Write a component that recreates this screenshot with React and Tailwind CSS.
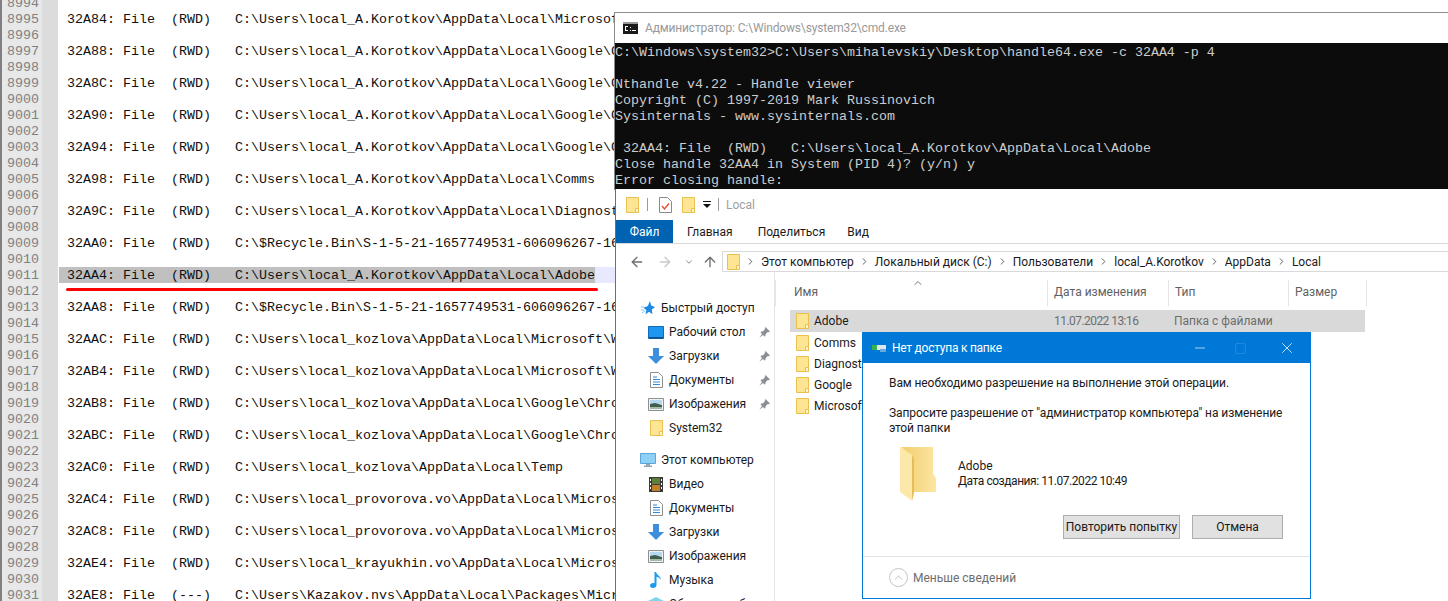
import React from 'react';
import { ArrowLeft, ArrowRight, ArrowUp, ChevronDown, ChevronRight, ChevronUp, Minus, Square, X } from 'lucide-react';

const logRows = {
  8995: '32A84: File  (RWD)   C:\\Users\\local_A.Korotkov\\AppData\\Local\\Microsoft\\Windows',
  8997: '32A88: File  (RWD)   C:\\Users\\local_A.Korotkov\\AppData\\Local\\Google\\Chrome',
  8999: '32A8C: File  (RWD)   C:\\Users\\local_A.Korotkov\\AppData\\Local\\Google\\Chrome',
  9001: '32A90: File  (RWD)   C:\\Users\\local_A.Korotkov\\AppData\\Local\\Google\\Chrome',
  9003: '32A94: File  (RWD)   C:\\Users\\local_A.Korotkov\\AppData\\Local\\Google\\Chrome',
  9005: '32A98: File  (RWD)   C:\\Users\\local_A.Korotkov\\AppData\\Local\\Comms',
  9007: '32A9C: File  (RWD)   C:\\Users\\local_A.Korotkov\\AppData\\Local\\Diagnostics',
  9009: '32AA0: File  (RWD)   C:\\$Recycle.Bin\\S-1-5-21-1657749531-606096267-1644491937',
  9011: '32AA4: File  (RWD)   C:\\Users\\local_A.Korotkov\\AppData\\Local\\Adobe',
  9013: '32AA8: File  (RWD)   C:\\$Recycle.Bin\\S-1-5-21-1657749531-606096267-1644491937',
  9015: '32AAC: File  (RWD)   C:\\Users\\local_kozlova\\AppData\\Local\\Microsoft\\Windows',
  9017: '32AB4: File  (RWD)   C:\\Users\\local_kozlova\\AppData\\Local\\Microsoft\\Windows',
  9019: '32AB8: File  (RWD)   C:\\Users\\local_kozlova\\AppData\\Local\\Google\\Chrome\\User',
  9021: '32ABC: File  (RWD)   C:\\Users\\local_kozlova\\AppData\\Local\\Google\\Chrome\\User',
  9023: '32AC0: File  (RWD)   C:\\Users\\local_kozlova\\AppData\\Local\\Temp',
  9025: '32AC4: File  (RWD)   C:\\Users\\local_provorova.vo\\AppData\\Local\\Microsoft\\Windows',
  9027: '32AC8: File  (RWD)   C:\\Users\\local_provorova.vo\\AppData\\Local\\Microsoft\\Windows',
  9029: '32AE4: File  (RWD)   C:\\Users\\local_krayukhin.vo\\AppData\\Local\\Microsoft\\Windows',
  9031: '32AE8: File  (---)   C:\\Users\\Kazakov.nvs\\AppData\\Local\\Packages\\Microsoft.Windows',
};

const lineNumbers = Array.from({ length: 38 }, (_, i) => 8994 + i);

const terminalLines = [
  'C:\\Windows\\system32>C:\\Users\\mihalevskiy\\Desktop\\handle64.exe -c 32AA4 -p 4',
  '',
  'Nthandle v4.22 - Handle viewer',
  'Copyright (C) 1997-2019 Mark Russinovich',
  'Sysinternals - www.sysinternals.com',
  '',
  ' 32AA4: File  (RWD)   C:\\Users\\local_A.Korotkov\\AppData\\Local\\Adobe',
  'Close handle 32AA4 in System (PID 4)? (y/n) y',
  'Error closing handle:',
];

const crumbs = ['Этот компьютер', 'Локальный диск (C:)', 'Пользователи', 'local_A.Korotkov', 'AppData', 'Local'];

const FolderIcon = ({ className = '' }) => (
  <svg width="13" height="16" viewBox="0 0 13 16" className={`shrink-0 ${className}`}>
    <path d="M.5.5h12v15H.5z" fill="#fde593" stroke="#eac14f" />
    <path d="M9.500 11.500h3v4h-3z" fill="#fff6cf" stroke="#eac14f" />
  </svg>
);

const CheckDocIcon = () => (
  <svg width="13" height="16" viewBox="0 0 13 16" className="shrink-0">
    <path d="M.5.5h8l4 4v11H.5z" fill="#fff" stroke="#8a8a8a" />
    <path d="M3 9l2.500 3L10 6.500" fill="none" stroke="#e0502a" strokeWidth="1.4" />
  </svg>
);

const StarIcon = () => (
  <svg width="14" height="14" viewBox="0 0 14 14" className="shrink-0">
    <path d="M9 0l1.200 4.400L14 6l-3.200 2.600.6 4.600L8 10.800 4.400 13.600l1-4.400L2.600 6.800 6.800 5z" fill="#1e88e5" />
    <path d="M0 6h3M0 9h3M1 12l3-2" stroke="#8cc4f0" strokeWidth="1" />
  </svg>
);

const DesktopIcon = () => (
  <svg width="16" height="13" viewBox="0 0 16 13" className="shrink-0">
    <path d="M.5.5h15v12H.5z" fill="#1e96f0" stroke="#0f6cbd" />
    <path d="M1 11h14v1.500H1z" fill="#0a4e8c" />
  </svg>
);

const DownloadIcon = () => (
  <svg width="16" height="16" viewBox="0 0 16 16" className="shrink-0">
    <path d="M5 0h6v8h5l-8 8-8-8h5z" fill="#3d8fde" />
  </svg>
);

const DocsIcon = () => (
  <svg width="13" height="16" viewBox="0 0 13 16" className="shrink-0 ml-[2px]">
    <path d="M.5.5h8l4 4v11H.5z" fill="#fff" stroke="#8f8f8f" />
    <path d="M3 5h4M3 7.500h7M3 10h7M3 12.500h7" stroke="#2f8ae0" />
  </svg>
);

const PictureIcon = () => (
  <svg width="16" height="13" viewBox="0 0 16 13" className="shrink-0">
    <path d="M.5.5h15v12H.5z" fill="#eef4f8" stroke="#8f8f8f" />
    <path d="M2 2h12v4H2z" fill="#b6d8ee" />
    <path d="M2 6l5-1 7 2v4H2z" fill="#3f5f4f" />
    <path d="M2 9h12v2H2z" fill="#a7b8a6" />
  </svg>
);

const FilmIcon = () => (
  <svg width="14" height="15" viewBox="0 0 14 15" className="shrink-0 ml-[1px]">
    <path d="M0 0h14v15H0z" fill="#3a3a3a" />
    <path d="M3 1h8v6H3z" fill="#5d7f3a" />
    <path d="M3 8h8v6H3z" fill="#c47f2a" />
    <path d="M1 2h1v2H1zM1 6h1v2H1zM1 10h1v2H1zM12 2h1v2h-1zM12 6h1v2h-1zM12 10h1v2h-1z" fill="#fff" />
  </svg>
);

const MusicIcon = () => (
  <svg width="12" height="16" viewBox="0 0 12 16" className="shrink-0 ml-[2px]">
    <path d="M4.500 0h1.500c.4 3 5 4 5 8-1-2-3-3-4.500-3.200V13c0 1.800-1.600 3-3.500 3S0 15 0 13.500 1.600 11 3 11c.6 0 1.100.1 1.500.3z" fill="#1a9af0" />
  </svg>
);

const MonitorIcon = () => (
  <svg width="16" height="14" viewBox="0 0 16 14" className="shrink-0">
    <path d="M.5.5h15v10H.5z" fill="#8fd0f5" stroke="#5aa6d8" />
    <path d="M6 11h4v1.500H6zM4 12.500h8V14H4z" fill="#9aa5ad" />
  </svg>
);

const CubeIcon = () => (
  <svg width="16" height="14" viewBox="0 0 16 14" className="shrink-0">
    <path d="M8 0l8 4-8 4-8-4z" fill="#7fd6e8" />
    <path d="M0 4l8 4v6l-8-4z" fill="#3fb4d0" />
    <path d="M16 4l-8 4v6l8-4z" fill="#58c4dc" />
  </svg>
);

const PinIcon = () => (
  <svg width="11" height="11" viewBox="0 0 11 11" className="shrink-0">
    <path d="M6.500 0L11 4.500 9.800 5.200 8.800 5 6.500 7.300 6.400 9 5.500 9.500 1.600 5.500 2 4.600 3.700 4.500 6 2.200 5.800 1.200zM3 7L.3 10.700 4 8z" fill="#8b8f94" />
  </svg>
);

const BigFolderIcon = () => (
  <svg width="37" height="54" viewBox="0 0 37 54" className="shrink-0">
    <defs>
      <linearGradient id="folderBack" x1="0" y1="0" x2="1" y2="0">
        <stop offset="0" stopColor="#f3cd6d" />
        <stop offset="1" stopColor="#fbe6a2" />
      </linearGradient>
    </defs>
    <path d="M1 0h32v27l3 4v14H12V10z" fill="url(#folderBack)" />
    <path d="M0 0l12 8v46L0 45z" fill="#fce9a9" />
    <path d="M12 8v46l2-8V12z" fill="#e5bd5d" />
  </svg>
);

const DialogIcon = () => (
  <svg width="15" height="10" viewBox="0 0 15 10" className="shrink-0">
    <path d="M0 2h5v5H0z" fill="#35b34a" />
    <path d="M5 2h9v5H5z" fill="#dfe7ee" />
    <path d="M8 6h6v3H8z" fill="#6aa9e0" />
  </svg>
);

const NavItem = ({ icon, label, pinned }) => (
  <div className="flex h-6 items-center whitespace-nowrap">
    <div className="flex w-[21px] shrink-0 justify-start">{icon}</div>
    <span>{label}</span>
    {pinned && <span className="ml-auto mr-[4px]"><PinIcon /></span>}
  </div>
);

const Column = ({ label, width, children }) => (
  <div className={`relative h-[26px] border-l border-[#e5e5e5] pl-[6px] leading-[24px] text-[#5f5f5f] ${width}`}>
    {label}
    {children}
  </div>
);

const NotepadPane = () => (
  <div className="-mt-[5px] w-[615px] overflow-hidden border-l-2 border-[#808080] font-['Liberation_Mono',monospace] text-[13.33px] leading-4 text-[#111]">
    {lineNumbers.map((n) => (
      <div key={n} className="flex h-4 whitespace-pre">
        <div className="w-[40px] shrink-0 bg-[#e8e8e8] pl-[5px] pt-px text-[#808080]">{n}</div>
        <div className="w-[16px] shrink-0 bg-[#dcdcdc]" />
        {n === 9011 ? (
          <div className="ml-px flex flex-1 bg-[#e8e8ff]">
            <div className="h-4 bg-[#c0c0c0] pl-2 pt-px">{logRows[n]}</div>
          </div>
        ) : (
          <div className="flex-1 pl-[9px] pt-px">{logRows[n] || ''}</div>
        )}
      </div>
    ))}
  </div>
);

const CmdWindow = () => (
  <div className="absolute left-[614px] right-0 top-[12px] border-l border-t border-[#8c8c8c] bg-white">
    <div className="flex h-[30px] items-center pl-[8px] font-['Roboto',sans-serif] text-xs tracking-[-0.15px] text-[#999]">
      <svg width="15" height="12" viewBox="0 0 15 12" className="mr-[7px] shrink-0">
        <path d="M0 0h15v12H0z" fill="#1a1a1a" />
        <path d="M0 0h15v2H0z" fill="#9a9a9a" />
        <path d="M2 4h3v1H2zM2 5h1v3H2zM2 8h3v1H2zM7 8h1v1H7zM7 5h1v1H7zM9 8h4v1H9z" fill="#fff" />
      </svg>
      Администратор: C:\Windows\system32\cmd.exe
    </div>
    <div className="h-[147px] bg-[#0c0c0c] pt-[2px] font-['Liberation_Mono',monospace] text-[13.33px] leading-4 text-[#cccccc] whitespace-pre">
      {terminalLines.map((line, i) => (
        <div key={i} className="h-4">{line}</div>
      ))}
    </div>
  </div>
);

const ExplorerWindow = () => (
  <div className="absolute -right-[40px] left-[615px] top-[189px] h-[412px] overflow-hidden border-l border-[#6f6f6f] bg-white font-['Roboto',sans-serif] text-xs text-[#1a1a1a]">
    <div className="flex h-[31px] items-center pl-[10px]">
      <FolderIcon />
      <div className="ml-[8px] h-[13px] w-px bg-[#9a9a9a]" />
      <div className="ml-[11px]"><CheckDocIcon /></div>
      <div className="ml-[10px]"><FolderIcon /></div>
      <svg width="8" height="8" viewBox="0 0 8 8" className="ml-[8px]">
        <path d="M0 0h8v1H0zM0 3h8L4 7z" fill="#111" />
      </svg>
      <div className="ml-[7px] h-[13px] w-px bg-[#9a9a9a]" />
      <span className="ml-[7px] text-[#a0a0a0]">Local</span>
    </div>

    <div className="flex h-[24px] items-center border-b border-[#d9d9d9]">
      <div className="flex h-[23px] w-[57px] items-center justify-center bg-[#0063b1] text-white">Файл</div>
      <span className="ml-[14px]">Главная</span>
      <span className="ml-[25px]">Поделиться</span>
      <span className="ml-[22px]">Вид</span>
    </div>

    <div className="flex h-[28px] items-end">
      <div className="flex h-[21px] w-[106px] shrink-0 items-center pl-[13px]">
        <ArrowLeft size={16} className="text-[#6d6d6d]" />
        <ArrowRight size={16} className="ml-[12px] text-[#c8c8c8]" />
        <ChevronDown size={10} className="ml-[11px] text-[#777]" />
        <ArrowUp size={16} className="ml-[8px] text-[#6d6d6d]" />
      </div>
      <div className="flex h-[21px] flex-1 items-center border border-[#d9d9d9] pl-[4px]">
        <FolderIcon />
        {crumbs.map((crumb) => (
          <React.Fragment key={crumb}>
            <ChevronRight size={11} className="mx-[5px] shrink-0 text-[#555]" />
            <span className="whitespace-nowrap">{crumb}</span>
          </React.Fragment>
        ))}
      </div>
    </div>

    <div className="flex">
      <div className="h-[330px] w-[159px] shrink-0 border-r border-[#e5e5e5] pl-[25px] pt-[24px]">
        <div className="flex h-6 items-center whitespace-nowrap"><div className="w-[20px]"><StarIcon /></div>Быстрый доступ</div>
        <div className="pl-[7px]">
          <NavItem icon={<DesktopIcon />} label="Рабочий стол" pinned />
          <NavItem icon={<DownloadIcon />} label="Загрузки" pinned />
          <NavItem icon={<DocsIcon />} label="Документы" pinned />
          <NavItem icon={<PictureIcon />} label="Изображения" pinned />
          <NavItem icon={<FolderIcon className="ml-[2px]" />} label="System32" />
        </div>
        <div className="mt-2 -ml-[1px] flex h-6 items-center whitespace-nowrap"><div className="w-[21px]"><MonitorIcon /></div>Этот компьютер</div>
        <div className="pl-[7px]">
          <NavItem icon={<FilmIcon />} label="Видео" />
          <NavItem icon={<DocsIcon />} label="Документы" />
          <NavItem icon={<DownloadIcon />} label="Загрузки" />
          <NavItem icon={<PictureIcon />} label="Изображения" />
          <NavItem icon={<MusicIcon />} label="Музыка" />
          <NavItem icon={<CubeIcon />} label="Объемные объекты" />
        </div>
      </div>

      <div className="flex-1 pt-[8px]">
        <div className="flex">
          <Column label="Имя" width="w-[272px] pl-[18px]">
            <ChevronUp size={12} className="absolute left-[136px] -top-[3px] text-[#777]" />
          </Column>
          <Column label="Дата изменения" width="w-[121px]" />
          <Column label="Тип" width="w-[120px]" />
          <Column label="Размер" width="w-[79px] border-r" />
        </div>
        <div className="ml-[15px] mt-[4px] w-[575px]">
          <div className="flex h-[22px] items-center bg-[#d9d9d9] pl-[6px]">
            <FolderIcon />
            <span className="ml-[5px] w-[240px]">Adobe</span>
            <span className="w-[120px] tracking-[-0.55px] text-[#6d6d6d]">11.07.2022 13:16</span>
            <span className="text-[#6d6d6d]">Папка с файлами</span>
          </div>
          {['Comms', 'Diagnostics', 'Google', 'Microsoft'].map((name) => (
            <div key={name} className="flex h-[21px] items-center pl-[6px]">
              <FolderIcon />
              <span className="ml-[5px]">{name}</span>
            </div>
          ))}
        </div>
      </div>
    </div>
  </div>
);

const AccessDialog = () => (
  <div className="absolute left-[862px] top-[332px] h-[267px] w-[449px] border border-[#0078d7] bg-white font-['Roboto',sans-serif] text-xs text-[#1a1a1a]">
    <div className="flex h-[30px] items-center bg-[#0078d7] pl-[9px] text-white">
      <DialogIcon />
      <span className="ml-[5px] flex-1 tracking-[-0.25px]">Нет доступа к папке</span>
      <Minus size={16} strokeWidth={1} className="mr-[26px]" />
      <Square size={13} strokeWidth={1} className="mr-[31px] text-[#3f9be6]" />
      <X size={18} strokeWidth={1} className="mr-[14px]" />
    </div>
    <div className="pl-[26px] pt-[13px] leading-[15px]">
      <p className="tracking-[-0.09px]">Вам необходимо разрешение на выполнение этой операции.</p>
      <p className="mt-[15px] tracking-[-0.08px]">Запросите разрешение от "администратор компьютера" на изменение<br />этой папки</p>
      <div className="mt-[11px] flex h-[54px] items-center pl-[11px]">
        <BigFolderIcon />
        <div className="ml-[21px]">
          <div>Adobe</div>
          <div className="tracking-[-0.45px]">Дата создания: 11.07.2022 10:49</div>
        </div>
      </div>
    </div>
    <div className="mt-[14px] flex justify-end gap-3 pr-[27px]">
      <button className="h-[24px] w-[117px] border border-[#adadad] bg-[#e1e1e1]">Повторить попытку</button>
      <button className="h-[24px] w-[91px] border border-[#adadad] bg-[#e1e1e1]">Отмена</button>
    </div>
    <div className="mt-[17px] flex h-[42px] items-center border-t border-[#e3e3e3] pl-[26px] text-[#6d6d6d]">
      <div className="flex h-[19px] w-[19px] items-center justify-center rounded-full border border-[#c4c4c4]">
        <ChevronUp size={13} strokeWidth={1.5} className="text-[#b0b0b0]" />
      </div>
      <span className="ml-[5px]">Меньше сведений</span>
    </div>
  </div>
);

const App = () => (
  <div className="relative h-[601px] w-[1448px] overflow-hidden bg-white">
    <NotepadPane />
    <div className="absolute left-[66px] top-[288px] h-[3px] w-[532px] rounded-full bg-[#ff0000]" />
    <CmdWindow />
    <ExplorerWindow />
    <AccessDialog />
  </div>
);

export default App;
